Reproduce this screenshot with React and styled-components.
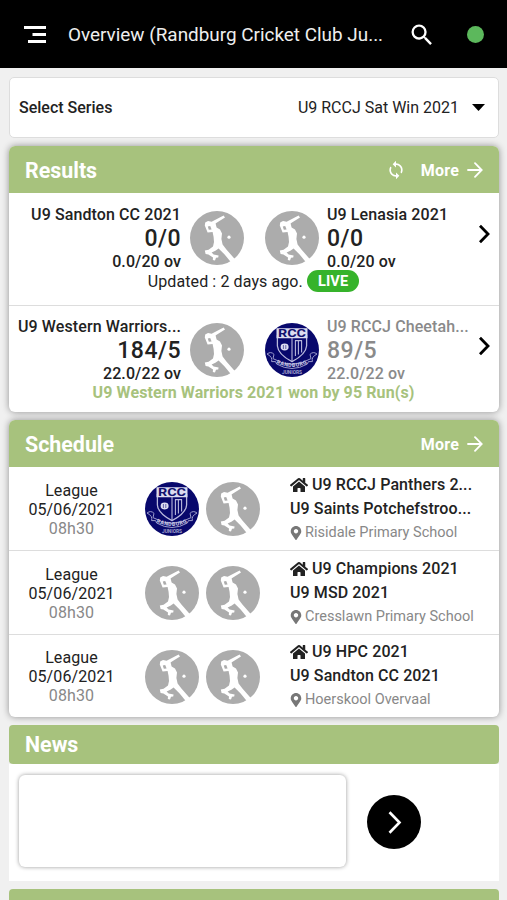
import React from 'react'
import styled, { createGlobalStyle } from 'styled-components';
import { MdSearch, MdSync } from 'react-icons/md';
import { FaHome, FaMapMarkerAlt } from 'react-icons/fa';

const results = [
  {
    home: { name: 'U9 Sandton CC 2021', score: '0/0', overs: '0.0/20 ov' },
    away: { name: 'U9 Lenasia 2021', score: '0/0', overs: '0.0/20 ov' },
    updated: 'Updated : 2 days ago.',
  },
  {
    home: { name: 'U9 Western Warriors...', score: '184/5', overs: '22.0/22 ov' },
    away: { name: 'U9 RCCJ Cheetah...', score: '89/5', overs: '22.0/22 ov', lost: true, crest: true },
    outcome: 'U9 Western Warriors 2021 won by 95 Run(s)',
  },
];

const fixtures = [
  { home: 'U9 RCCJ Panthers 2...', away: 'U9 Saints Potchefstroo...', venue: 'Risidale Primary School', crest: true },
  { home: 'U9 Champions 2021', away: 'U9 MSD 2021', venue: 'Cresslawn Primary School' },
  { home: 'U9 HPC 2021', away: 'U9 Sandton CC 2021', venue: 'Hoerskool Overvaal' },
];

function BatterLogo() {
  return (
    <Logo viewBox="0 0 54 54">
      <circle cx="27" cy="27" r="27" fill="#acacac" />
      <g fill="#fff">
        <path d="M33.6 4.6 L35 6.6 L27 11.4 L25.6 12.6 L26.6 16.4 L30 18.4 L32 22.4 L31.4 28 L32.6 33.6 L36.4 38.6 L45.2 48.4 L41.2 51.6 L34.6 43.4 L28.6 37.6 L25.4 39.8 L21.6 41.6 L23.6 43.6 L28.6 44.6 L28.2 46.4 L26 46.8 L25 49.6 L22.8 49 L23 46.6 L18.4 43.4 L15.6 43 L14.8 39.6 L18.6 38.8 L23 35.4 L24 31 L23.6 26 L22.6 21 L17.6 21.4 L14.8 14.6 L15.2 11.6 L18 10 L21.6 10.8 L24 9.6 Z" />
        <circle cx="39" cy="26.2" r="1.6" />
      </g>
      <path d="M17.8 15.4 L20.2 15 L21.6 18.6 L18.8 18.8 Z" fill="#acacac" />
    </Logo>
  );
}

function CrestLogo() {
  return (
    <Logo viewBox="0 0 54 54">
      <circle cx="27" cy="27" r="27" fill="#08086c" />
      <path d="M12.4 12 V23 C13 30 20 35 27 38.6 C34 35 41 30 41.6 23 V12" fill="none" stroke="#b9b9dc" strokeWidth="1.3" />
      <path d="M11.5 5.2 H42.5 V15.2 H11.5 Z" fill="#dcdcf0" />
      <CrestText x="27" y="13.8" fontSize="10.5" textLength="28" lengthAdjust="spacingAndGlyphs" fill="#12126e">RCC</CrestText>
      <path d="M27 15 V38 M30.4 17.6 V33 M33.4 17.6 V31.6 M36.6 17.6 V29.6 M30 17.6 H37" fill="none" stroke="#b9b9dc" strokeWidth="1.1" />
      <ellipse cx="19.6" cy="24" rx="4" ry="3.4" fill="#dcdcf0" />
      <path d="M18.4 22 V26 M20.8 22 V26" stroke="#30308a" strokeWidth=".7" />
      <path d="M2 31 Q6 28 9 31.4 L8 35.6 Q27 47 46 35.6 L45 31.4 Q48 28 52 31 M2 31 Q8 34 6.6 38.6 L10.6 38.6 L11.6 41 Q27 50 42.4 41 L43.4 38.6 L47.4 38.6 Q46 34 52 31" fill="none" stroke="#9c9ccc" strokeWidth="1" />
      <path id="ribbon" d="M9 39 Q27 49 45 39" fill="none" />
      <CrestText fontSize="5.4" letterSpacing=".5" fill="#cfcfe8">
        <textPath href="#ribbon" startOffset="50%">RANDBURG</textPath>
      </CrestText>
      <CrestText x="27" y="51.2" fontSize="4.6" textLength="20" lengthAdjust="spacingAndGlyphs" fill="#a5a5d0">JUNIORS</CrestText>
    </Logo>
  );
}

function Chevron({ size = 20, weight = 2.8 }) {
  return (
    <svg width={size} height={size} viewBox="0 0 20 20" fill="none" stroke="currentColor" strokeWidth={weight}>
      <path d="M6 1.8 L14 10 L6 18.2" />
    </svg>
  );
}

function More() {
  return (
    <MoreLink>
      More
      <svg width="16" height="16" viewBox="0 0 16 16" fill="none" stroke="currentColor" strokeWidth="1.8" strokeLinecap="round">
        <path d="M1 8 H14.4 M8 1.2 L14.7 8 L8 14.8" />
      </svg>
    </MoreLink>
  );
}

function Team({ team, align }) {
  return (
    <TeamInfo $align={align} $lost={team.lost}>
      <TeamName>{team.name}</TeamName>
      <Score>{team.score}</Score>
      <Overs>{team.overs}</Overs>
    </TeamInfo>
  );
}

export default function App() {
  return (
    <Page>
      <GlobalStyle />
      <TopBar>
        <svg width="22" height="17" viewBox="0 0 22 17" fill="#fff">
          <path d="M0 0 H22 V3 H0 Z M8.5 7 H22 V10 H8.5 Z M4 14 H22 V17 H4 Z" />
        </svg>
        <Title>Overview (Randburg Cricket Club Ju...</Title>
        <MdSearch size={28} />
        <Status />
      </TopBar>
      <Content>
        <SeriesPicker>
          <SeriesLabel>Select Series</SeriesLabel>
          <span>U9 RCCJ Sat Win 2021</span>
          <svg width="13" height="7" viewBox="0 0 13 7"><path d="M0 0 H13 L6.5 7 Z" /></svg>
        </SeriesPicker>

        <Card>
          <CardHeader>
            <Heading>Results</Heading>
            <MdSync size={20} />
            <More />
          </CardHeader>
          {results.map((match) => (
            <Result key={match.home.name}>
              <Team team={match.home} align="right" />
              <BatterLogo />
              {match.away.crest ? <CrestLogo /> : <BatterLogo />}
              <Team team={match.away} align="left" />
              <Chevron />
              <ResultNote>
                {match.outcome ? <Outcome>{match.outcome}</Outcome> : <>{match.updated}<Live>LIVE</Live></>}
              </ResultNote>
            </Result>
          ))}
        </Card>

        <Card>
          <CardHeader>
            <Heading>Schedule</Heading>
            <More />
          </CardHeader>
          {fixtures.map((fixture) => (
            <Fixture key={fixture.home}>
              <When>
                League<br />05/06/2021
                <Time>08h30</Time>
              </When>
              <Logos>
                {fixture.crest ? <CrestLogo /> : <BatterLogo />}
                <BatterLogo />
              </Logos>
              <div>
                <FixtureTeam><FaHome size={18} />{fixture.home}</FixtureTeam>
                <FixtureTeam>{fixture.away}</FixtureTeam>
                <Venue><FaMapMarkerAlt size={14} />{fixture.venue}</Venue>
              </div>
            </Fixture>
          ))}
        </Card>

        <section>
          <SectionBar><Heading>News</Heading></SectionBar>
          <NewsBody>
            <NewsCard />
            <NextButton><Chevron size={25} weight={2.1} /></NextButton>
          </NewsBody>
        </section>
        <SectionBar />
      </Content>
    </Page>
  )
}

const GlobalStyle = createGlobalStyle`
  * {
    box-sizing: border-box;
  }
  body {
    margin: 0;
    background: #f0f0f0;
  }
`;

const Page = styled.div`
  width: 507px;
  height: 900px;
  overflow: hidden;
  font-family: Roboto, sans-serif;
  font-size: 16px;
  color: #222;
`;

const TopBar = styled.header`
  display: flex;
  align-items: center;
  height: 68px;
  padding: 1px 23px 0 24px;
  background: #000;
  color: #fff;
`;

const Title = styled.div`
  flex: 1;
  margin-left: 22px;
  font-size: 18.9px;
  white-space: nowrap;
  color: #eee;
`;

const Status = styled.span`
  width: 17px;
  height: 17px;
  margin-left: 31px;
  border-radius: 50%;
  background: #5cb85c;
`;

const Content = styled.main`
  display: flex;
  flex-direction: column;
  gap: 8px;
  padding: 9px 8px 0 9px;
`;

const SeriesPicker = styled.div`
  display: flex;
  align-items: center;
  height: 61px;
  padding: 0 13px 0 9px;
  border: 1px solid #ddd;
  border-radius: 5px;
  background: #fff;

  svg {
    margin-left: 13px;
  }
`;

const SeriesLabel = styled.span`
  flex: 1;
  font-weight: 500;
`;

const Card = styled.section`
  border-radius: 6px;
  background: #fff;
  box-shadow: 0 0 7px rgba(0, 0, 0, 0.4);
  overflow: hidden;
`;

const CardHeader = styled.div`
  display: flex;
  align-items: center;
  height: 47px;
  padding: 1px 16px 0;
  background: #a7c27d;
  color: #fff;
`;

const Heading = styled.h2`
  flex: 1;
  margin: 0;
  font-size: 21.4px;
  font-weight: 700;
`;

const MoreLink = styled.span`
  display: flex;
  align-items: center;
  gap: 8px;
  margin-left: 15px;
  font-weight: 700;
  letter-spacing: 0.2px;
`;

const Logo = styled.svg`
  display: block;
  width: 54px;
  height: 54px;
`;

const CrestText = styled.text`
  font-family: Roboto, sans-serif;
  font-weight: 700;
  text-anchor: middle;
`;

const Result = styled.div`
  display: grid;
  grid-template-columns: 172px 54px 54px 146px 20px;
  grid-template-rows: 67px 20px;
  column-gap: 9px;
  align-items: center;
  height: 112px;
  padding-top: 11px;

  & + & {
    height: 107px;
    border-top: 1px solid #ddd;
    padding-top: 10px;
    grid-template-rows: 67px 18px;
  }
  > svg:nth-of-type(1), > svg:nth-of-type(2) {
    margin-top: 1px;
  }
  > svg:nth-of-type(2) {
    margin-left: 12px;
  }
  > svg:nth-of-type(3) {
    margin: -7px 0 0 3px;
    color: #000;
  }
`;

const TeamInfo = styled.div`
  margin-left: ${(props) => (props.$align === 'left' ? '11px' : '0')};
  text-align: ${(props) => props.$align};
  color: ${(props) => (props.$lost ? '#8a8a8a' : '#222')};
  white-space: nowrap;
`;

const TeamName = styled.div`
  line-height: 19px;
  font-weight: 500;
  letter-spacing: 0.1px;
`;

const Score = styled.div`
  line-height: 29px;
  font-size: 23px;
  font-weight: 500;
  letter-spacing: 0.5px;
`;

const Overs = styled.div`
  line-height: 18px;
  font-weight: 500;
  letter-spacing: 0.1px;
`;

const ResultNote = styled.div`
  grid-column: 1 / -1;
  display: flex;
  align-items: center;
  justify-content: center;
  width: 489px;
  gap: 4px;
  letter-spacing: 0.1px;
`;

const Live = styled.span`
  height: 22px;
  padding: 0 11px;
  border-radius: 11px;
  background: #36b32b;
  color: #fff;
  font-size: 14.6px;
  font-weight: 700;
  line-height: 22px;
`;

const Outcome = styled.span`
  color: #a7c27d;
  font-weight: 700;
`;

const Fixture = styled.div`
  display: grid;
  grid-template-columns: 125px 115px 1fr;
  column-gap: 11px;
  align-items: center;
  height: 83px;

  & + & {
    height: 84px;
    border-top: 1px solid #ddd;
  }
  & + & + & {
    height: 83px;
  }
`;

const When = styled.div`
  text-align: center;
  line-height: 19px;
  margin-top: 1px;
  letter-spacing: 0.1px;
`;

const Time = styled.div`
  color: #888;
`;

const Logos = styled.div`
  display: flex;
  gap: 7px;
  margin-top: 1px;
`;

const FixtureTeam = styled.div`
  display: flex;
  align-items: center;
  gap: 4px;
  margin-left: 19px;
  line-height: 24px;
  font-weight: 500;
  letter-spacing: 0.1px;
`;

const Venue = styled.div`
  display: flex;
  align-items: center;
  gap: 2px;
  margin-left: 18px;
  line-height: 24px;
  font-size: 14.5px;
  color: #888;

  svg {
    color: #777;
  }
`;

const SectionBar = styled.div`
  display: flex;
  align-items: center;
  height: 39px;
  padding: 0 16px;
  border-radius: 4px;
  background: #a7c27d;
  color: #fff;
`;

const NewsBody = styled.div`
  display: flex;
  align-items: flex-start;
  height: 117px;
  padding: 11px 10px;
  background: #fff;
`;

const NewsCard = styled.div`
  width: 327px;
  height: 92px;
  border-radius: 6px;
  background: #fff;
  box-shadow: 0 0 4px rgba(0, 0, 0, 0.4);
`;

const NextButton = styled.button`
  display: flex;
  align-items: center;
  justify-content: center;
  width: 54px;
  height: 54px;
  margin: 20px 0 0 21px;
  padding: 0;
  border: 0;
  border-radius: 50%;
  background: #000;
  color: #fff;
`;
